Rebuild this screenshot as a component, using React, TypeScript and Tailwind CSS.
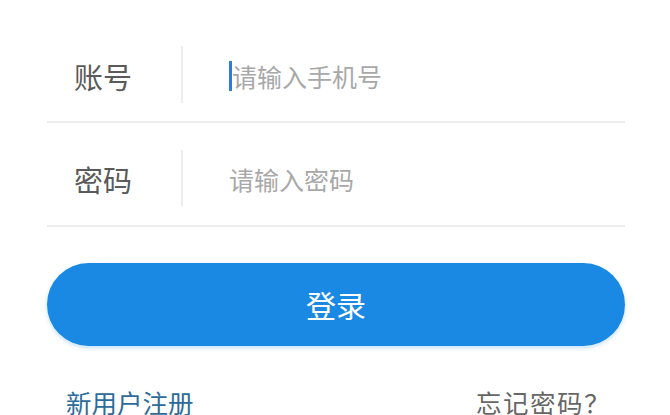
import React from "react";

const font = { fontFamily: '"Noto Sans CJK SC", "Noto Sans", sans-serif' };

export default function App() {
  return (
    <div className="w-[670px] h-[415px] bg-white overflow-hidden" style={font}>
      <div className="pl-[47px] pr-[45px]">
        <div className="flex items-center pt-[46px] pb-[18px] border-b-2 border-[#ececec]">
          <div className="w-[134px] pl-[27px] text-[29px] leading-[36px] text-[#5a5a5a] mt-[2px]">账号</div>
          <div className="w-[2px] h-[57px] bg-[#ededed]"></div>
          <div className="flex items-center ml-[46px] mt-[2px]">
            <span className="w-[3px] h-[30px] bg-[#2a7fd4]"></span>
            <span className="text-[25px] leading-[32px] text-[#a8a8a8]">请输入手机号</span>
          </div>
        </div>
        <div className="flex items-center pt-[27px] pb-[19px] border-b-2 border-[#ececec]">
          <div className="w-[134px] pl-[27px] text-[29px] leading-[36px] text-[#5a5a5a] mt-[2px]">密码</div>
          <div className="w-[2px] h-[56px] bg-[#ededed]"></div>
          <div className="ml-[46px] mt-[2px] text-[25px] leading-[32px] text-[#a8a8a8]">请输入密码</div>
        </div>
        <div className="mt-[36px] h-[83px] rounded-full bg-[#1a89e3] flex items-center justify-center text-white text-[30px] shadow-[0_2px_4px_rgba(26,137,227,0.25)]">
          登录
        </div>
        <div className="mt-[40px] flex justify-between items-center">
          <span className="ml-[19px] text-[25.5px] leading-[32px] text-[#2d6b99]">新用户注册</span>
          <span className="mr-[14px] text-[25.5px] leading-[32px] text-[#666] tracking-[1.5px]">忘记密码？</span>
        </div>
      </div>
    </div>
  );
}
